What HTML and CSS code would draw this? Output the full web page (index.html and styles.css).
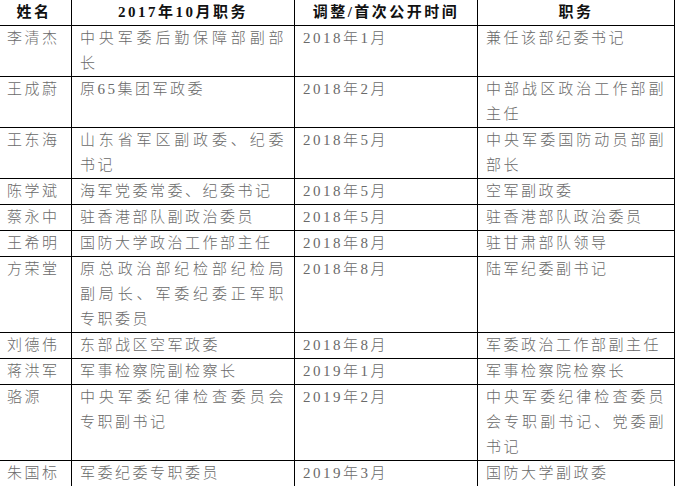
FILE: index.html
```html
<!DOCTYPE html>
<html lang="zh-CN">
<head>
<meta charset="utf-8">
<title>职务调整表</title>
<link rel="stylesheet" href="styles.css">
</head>
<body>
<table class="tbl">
  <colgroup>
    <col class="c-name">
    <col class="c-old">
    <col class="c-date">
    <col class="c-new">
  </colgroup>
  <thead>
    <tr><th>姓名</th><th>2017年10月职务</th><th>调整/首次公开时间</th><th>职务</th></tr>
  </thead>
  <tbody>
    <tr><td class="name">李清杰</td><td>中央军委后勤保障部副部长</td><td>2018年1月</td><td>兼任该部纪委书记</td></tr>
    <tr><td class="name">王成蔚</td><td>原65集团军政委</td><td>2018年2月</td><td>中部战区政治工作部副主任</td></tr>
    <tr><td class="name">王东海</td><td>山东省军区副政委、纪委书记</td><td>2018年5月</td><td>中央军委国防动员部副部长</td></tr>
    <tr><td class="name">陈学斌</td><td>海军党委常委、纪委书记</td><td>2018年5月</td><td>空军副政委</td></tr>
    <tr><td class="name">蔡永中</td><td>驻香港部队副政治委员</td><td>2018年5月</td><td>驻香港部队政治委员</td></tr>
    <tr><td class="name">王希明</td><td>国防大学政治工作部主任</td><td>2018年8月</td><td>驻甘肃部队领导</td></tr>
    <tr><td class="name">方荣堂</td><td>原总政治部纪检部纪检局副局长、军委纪委正军职专职委员</td><td>2018年8月</td><td>陆军纪委副书记</td></tr>
    <tr><td class="name">刘德伟</td><td>东部战区空军政委</td><td>2018年8月</td><td>军委政治工作部副主任</td></tr>
    <tr><td class="name">蒋洪军</td><td>军事检察院副检察长</td><td>2019年1月</td><td>军事检察院检察长</td></tr>
    <tr><td class="name">骆源</td><td>中央军委纪律检查委员会专职副书记</td><td>2019年2月</td><td>中央军委纪律检查委员会专职副书记、党委副书记</td></tr>
    <tr><td class="name">朱国标</td><td>军委纪委专职委员</td><td>2019年3月</td><td>国防大学副政委</td></tr>
  </tbody>
</table>
</body>
</html>
```

FILE: styles.css
```css
html, body {
  margin: 0;
  padding: 0;
  background: #ffffff;
}

body {
  overflow: hidden;
}

.tbl {
  border-collapse: collapse;
  table-layout: fixed;
  width: 679px;
  margin: -1px 0 0 -4px;
  font-family: "Liberation Serif", "Noto Sans CJK SC", serif;
  font-size: 15px;
  letter-spacing: 2.5px;
}

.c-name { width: 75px; }
.c-old { width: 223px; }
.c-date { width: 183px; }
.c-new { width: 197px; }

.tbl th,
.tbl td {
  border: 1px solid #000;
  padding: 0 8px;
  line-height: 25px;
  vertical-align: top;
}

.tbl th {
  font-weight: bold;
  color: #111;
  text-align: center;
}

.tbl td {
  color: #6a6a6a;
  font-weight: 300;
  text-align: justify;
}

.tbl td.name {
  padding-left: 10px;
  text-align: left;
}
```
